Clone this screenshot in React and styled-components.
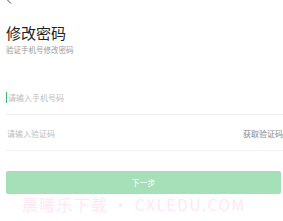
import React from 'react';
import styled, { createGlobalStyle } from 'styled-components';

const GlobalStyle = createGlobalStyle`
  html, body {
    margin: 0;
    padding: 0;
    background: #ffffff;
  }
  body {
    font-family: "Noto Sans CJK SC", "Liberation Sans", sans-serif;
    overflow: hidden;
  }
`;

const Page = styled.div`
  width: 283px;
  height: 221px;
  box-sizing: border-box;
  padding: 0 2px 0 6px;
  display: flex;
  flex-direction: column;
  overflow: hidden;
`;

const TopBar = styled.div`
  height: 20px;
  display: flex;
  align-items: flex-start;
`;

const Back = styled.svg`
  margin-top: -9px;
  margin-left: -1px;
`;

const Title = styled.h1`
  margin: 3px 0 0;
  font-size: 15px;
  line-height: 20px;
  font-weight: 400;
  color: #222222;
`;

const Subtitle = styled.p`
  margin: 2px 0 0;
  font-size: 7.5px;
  line-height: 10px;
  color: #9a9a9a;
`;

const Form = styled.div`
  margin-top: 25px;
  display: flex;
  flex-direction: column;
`;

const Field = styled.div`
  height: 34px;
  display: flex;
  align-items: center;
  justify-content: space-between;
  border-bottom: 1px solid #f1f1f1;
  margin-right: -2px;
  & + & {
    margin-top: 1px;
  }
`;

const Placeholder = styled.span`
  display: flex;
  align-items: center;
  font-size: 8px;
  color: #bdbdbd;
  padding-left: ${p => (p.$focused ? '0' : '1px')};
`;

const Caret = styled.span`
  width: 1px;
  height: 11px;
  background: #3db87a;
  margin-right: 1px;
`;

const CodeLink = styled.span`
  font-size: 8px;
  color: #888888;
`;

const Submit = styled.button`
  margin-top: 20px;
  height: 23px;
  width: 275px;
  border: none;
  border-radius: 2px;
  background: #a6e0b9;
  color: #ffffff;
  font-family: inherit;
  font-size: 8px;
  padding: 0;
`;

const Watermark = styled.div`
  margin-top: 1px;
  padding-left: 16px;
  font-size: 16px;
  line-height: 18px;
  color: #ffe8f5;
  white-space: nowrap;
  letter-spacing: 1.2px;
`;

export default function App() {
  return (
    <>
      <GlobalStyle />
      <Page>
        <TopBar>
          <Back width="14" height="16" viewBox="0 0 14 16">
            <path d="M9 2 L1 7.5 L6 12.5" fill="none" stroke="#444" strokeWidth="1" />
          </Back>
        </TopBar>
        <Title>修改密码</Title>
        <Subtitle>验证手机号修改密码</Subtitle>
        <Form>
          <Field>
            <Placeholder $focused>
              <Caret />
              请输入手机号码
            </Placeholder>
          </Field>
          <Field>
            <Placeholder>请输入验证码</Placeholder>
            <CodeLink>获取验证码</CodeLink>
          </Field>
        </Form>
        <Submit>下一步</Submit>
        <Watermark>晨曦乐下载 • CXLEDU.COM</Watermark>
      </Page>
    </>
  );
}
